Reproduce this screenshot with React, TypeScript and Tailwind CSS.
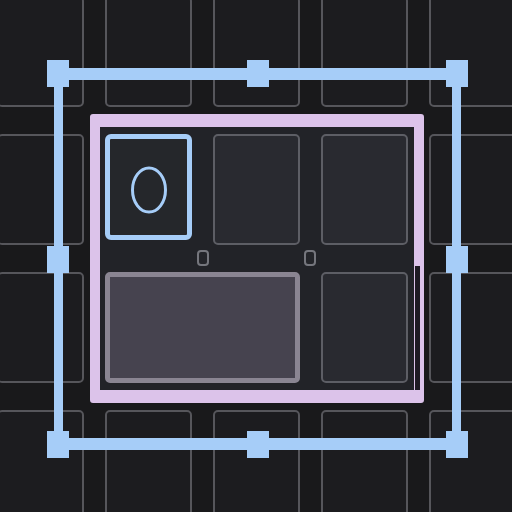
import React from 'react';

const COLS = 5;
const ROWS = 4;

// background canvas cells; the pink frame redraws the ones it covers
const Cell: React.FC = () => (
  <div className="rounded-[5px] border-2 border-[#56565b] bg-[#1c1c1f]" />
);

const InnerCell: React.FC = () => (
  <div className="rounded-[5px] border-2 border-[#5d5e65] bg-[#292a30]" />
);

const Handle: React.FC<{ hidden?: boolean }> = ({ hidden }) => (
  <div className={`w-[22px] h-[27px] ${hidden ? 'invisible' : 'bg-[#a6cdf8]'}`} />
);

const GapKnob: React.FC<{ className: string }> = ({ className }) => (
  <div
    className={`absolute w-[12px] h-[16px] rounded-[4px] border-2 border-[#75767d] bg-[#24252a] ${className}`}
  />
);

export default function App() {
  return (
    <div className="relative w-[512px] h-[512px] overflow-hidden bg-[#19191b]">
      {/* base grid */}
      <div className="grid grid-cols-[repeat(5,87px)] grid-rows-[repeat(4,111px)] gap-x-[21px] gap-y-[27px] -ml-[3px] -mt-[4px]">
        {Array.from({ length: COLS * ROWS }).map((_, i) => (
          <Cell key={i} />
        ))}
      </div>

      {/* container frame */}
      <div className="absolute left-[90px] top-[114px] w-[334px] h-[289px] rounded-[3px] border-x-[10px] border-y-[13px] border-[#dcc3ea] bg-[#222328]">
        <div className="relative h-full grid grid-cols-[repeat(3,87px)] grid-rows-[repeat(2,111px)] gap-x-[21px] gap-y-[27px] pl-[5px] pt-[7px]">
          <div className="h-[106px] rounded-[6px] border-[5px] border-[#a6cdf8] bg-[#25272b] flex items-center justify-center">
            <svg width="36" height="48" viewBox="0 0 36 48" className="mt-[6px]">
              <ellipse cx="18" cy="24" rx="16.5" ry="22" fill="none" stroke="#a6cdf8" strokeWidth="3" />
            </svg>
          </div>
          <InnerCell />
          <InnerCell />
          <div className="col-span-2 rounded-[5px] border-[5px] border-[#8a8592] bg-[#46434f]" />
          <InnerCell />

          <GapKnob className="left-[97px] top-[123px]" />
          <GapKnob className="left-[204px] top-[123px]" />
        </div>
        <div className="absolute left-[315px] top-[139px] w-[5px] h-[124px] bg-[#1e1a23]" />
      </div>

      {/* selection box */}
      <div className="absolute left-[54px] top-[68px] w-[407px] h-[382px]">
        <div className="absolute inset-0 border-x-[9px] border-y-[12px] border-[#a6cdf8]" />
        <div className="absolute -left-[7px] -right-[7px] -top-[8px] -bottom-[8px] flex flex-col justify-between">
          <div className="flex justify-between">
            <Handle />
            <Handle />
            <Handle />
          </div>
          <div className="flex justify-between">
            <Handle />
            <Handle hidden />
            <Handle />
          </div>
          <div className="flex justify-between">
            <Handle />
            <Handle />
            <Handle />
          </div>
        </div>
      </div>
    </div>
  );
}
